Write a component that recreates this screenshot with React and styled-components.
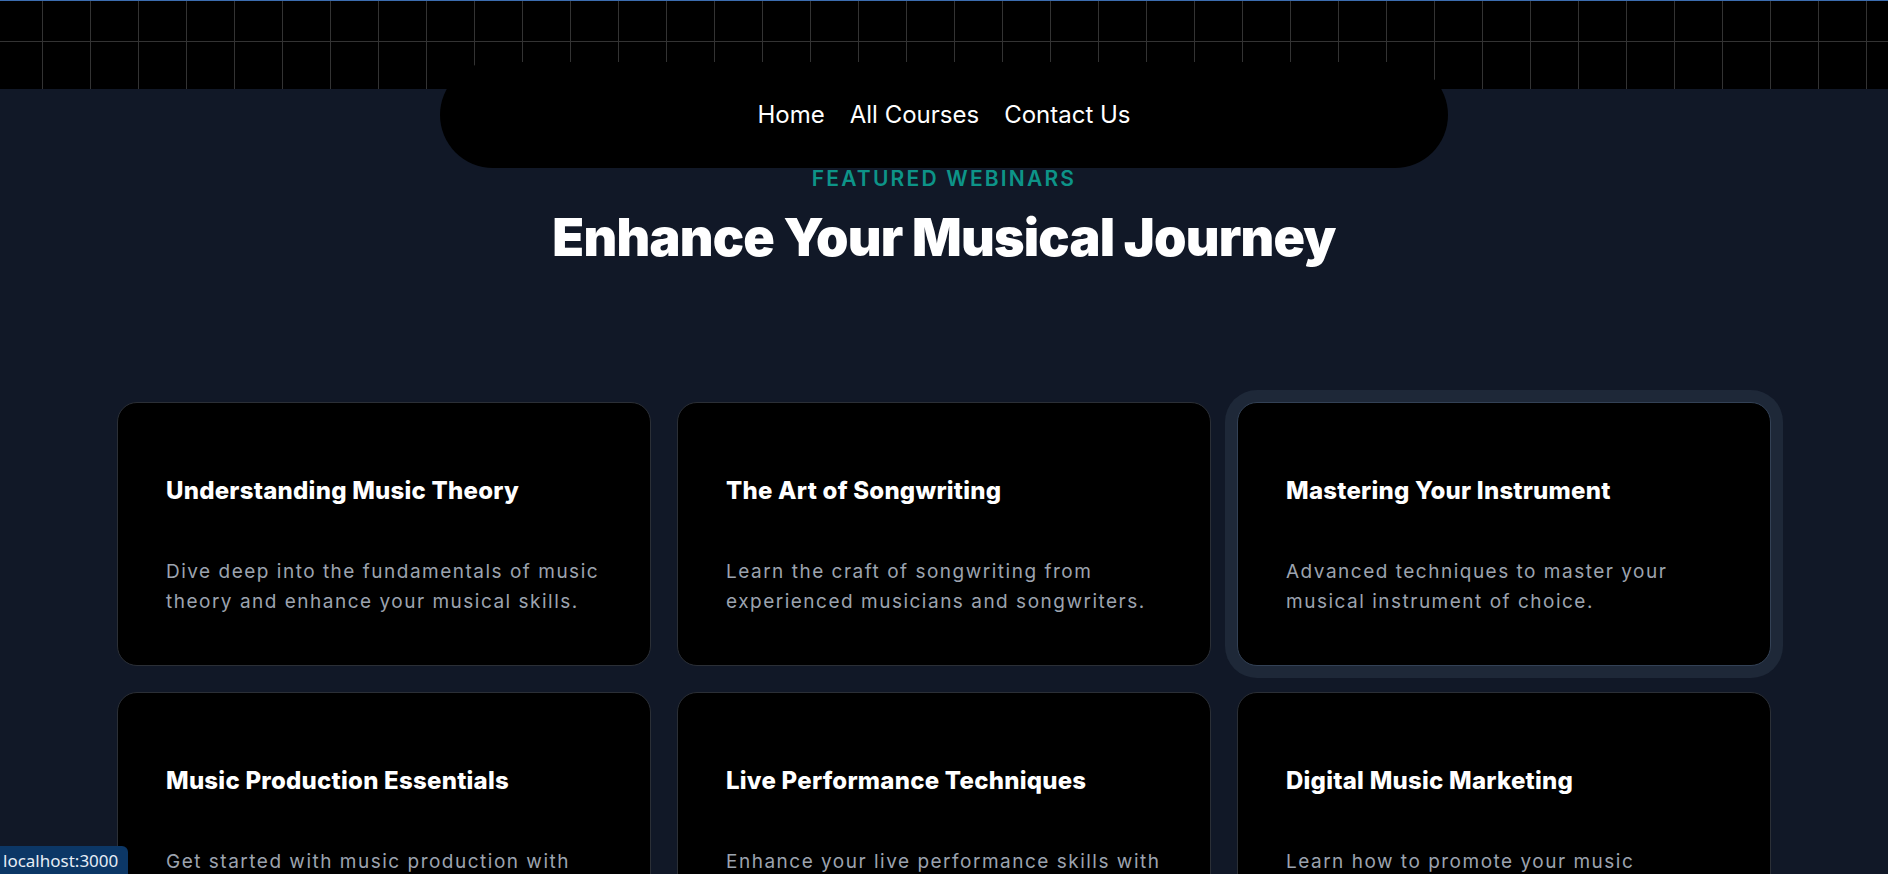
import React from 'react';
import styled, { createGlobalStyle } from 'styled-components';

const GlobalStyle = createGlobalStyle`
  html, body {
    margin: 0;
    padding: 0;
    background: #111827;
  }
  body {
    font-family: Inter, "Noto Sans", sans-serif;
    color: #fff;
  }
  * {
    box-sizing: border-box;
  }
`;

const Page = styled.div`
  min-height: 100vh;
  background: #111827;
  padding-bottom: 80px;
`;

const GridBand = styled.div`
  height: 89px;
  border-top: 1px solid #3c6db0;
  background-color: #000;
  background-image: linear-gradient(to right, #333 1px, transparent 1px),
    linear-gradient(to bottom, #333 1px, transparent 1px);
  background-size: 48px 48px;
  background-position: 42px 40px;
`;

const NavPill = styled.nav`
  width: 1008px;
  height: 106px;
  margin: -27px auto 0;
  position: relative;
  background: #000;
  border-radius: 53px;
  display: flex;
  align-items: center;
  justify-content: center;
  gap: 25px;
  padding-bottom: 2px;
`;

const NavLink = styled.a`
  color: #fff;
  text-decoration: none;
  font-size: 24px;
  font-weight: 400;
  cursor: pointer;
`;

const Intro = styled.header`
  display: flex;
  flex-direction: column;
  align-items: center;
`;

const Eyebrow = styled.p`
  margin: 1px 0 0;
  color: #0d9488;
  font-size: 21px;
  line-height: 20px;
  font-weight: 600;
  letter-spacing: 2.2px;
  text-transform: uppercase;
`;

const Heading = styled.h2`
  margin: 19px 0 0;
  color: #fff;
  font-size: 52px;
  line-height: 60px;
  font-weight: 900;
  letter-spacing: -0.015em;
`;

const CardGrid = styled.section`
  max-width: 1654px;
  margin: 134px auto 0;
  display: grid;
  grid-template-columns: repeat(3, 1fr);
  gap: 26px;
`;

const Card = styled.article`
  height: 264px;
  background: #000;
  border: 1px solid ${p => (p.$active ? '#334155' : '#2b2f36')};
  border-radius: 20px;
  padding: 72px 48px 48px;
  box-shadow: ${p => (p.$active ? '0 0 0 12px #1e2838' : 'none')};
`;

const CardTitle = styled.h3`
  margin: 0 0 50px;
  font-size: 24px;
  line-height: 32px;
  font-weight: 800;
  letter-spacing: 0.01em;
  color: #fff;
`;

const CardText = styled.p`
  margin: 0;
  font-size: 19px;
  line-height: 30px;
  letter-spacing: 1.5px;
  color: #9ca3af;
`;

const StatusBar = styled.div`
  position: fixed;
  left: 0;
  bottom: 0;
  height: 28px;
  padding: 0 10px 0 3px;
  display: flex;
  align-items: center;
  background: #0c3766;
  border-top-right-radius: 6px;
  color: #e6edf5;
  font-family: "Noto Sans", "Open Sans", sans-serif;
  font-size: 17px;
`;

const webinars = [
  {
    title: 'Understanding Music Theory',
    text: 'Dive deep into the fundamentals of music theory and enhance your musical skills.',
  },
  {
    title: 'The Art of Songwriting',
    text: 'Learn the craft of songwriting from experienced musicians and songwriters.',
  },
  {
    title: 'Mastering Your Instrument',
    text: 'Advanced techniques to master your musical instrument of choice.',
    active: true,
  },
  {
    title: 'Music Production Essentials',
    text: 'Get started with music production with industry-standard tools and software.',
  },
  {
    title: 'Live Performance Techniques',
    text: 'Enhance your live performance skills with expert tips and practice routines.',
  },
  {
    title: 'Digital Music Marketing',
    text: 'Learn how to promote your music effectively in the digital age.',
  },
];

const App = () => {
  return (
    <>
      <GlobalStyle />
      <Page>
        <GridBand />
        <NavPill>
          <NavLink>Home</NavLink>
          <NavLink>All Courses</NavLink>
          <NavLink>Contact Us</NavLink>
        </NavPill>
        <Intro>
          <Eyebrow>Featured Webinars</Eyebrow>
          <Heading>Enhance Your Musical Journey</Heading>
        </Intro>
        <CardGrid>
          {webinars.map(w => (
            <Card key={w.title} $active={w.active}>
              <CardTitle>{w.title}</CardTitle>
              <CardText>{w.text}</CardText>
            </Card>
          ))}
        </CardGrid>
      </Page>
      <StatusBar>localhost:3000</StatusBar>
    </>
  );
};

export default App;
